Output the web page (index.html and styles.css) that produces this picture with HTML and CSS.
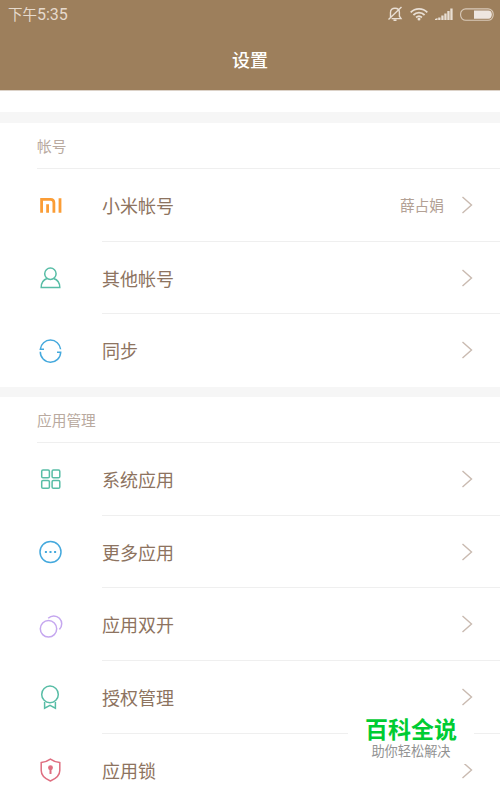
FILE: index.html
```html
<!DOCTYPE html>
<html lang="zh-CN">

<head>
    <meta charset="UTF-8">
    <meta name="viewport" content="width=device-width, initial-scale=1.0">
    <title>设置</title>
    <link rel="stylesheet" href="styles.css">
</head>

<body>
    <div class="screen">
        <header class="header">
            <div class="status-bar">
                <span class="time">下午<span class="digits">5:35</span></span>
                <div class="status-icons">
                    <svg width="16" height="16" viewBox="0 0 16 16" fill="none" stroke="#e9dfd4" stroke-width="1.4">
                        <path d="M3.5 11.5V6.5C3.5 3.8 5.2 2.2 8 2.2S12.4 3.8 12.4 6.5V10.2L14 12.6H4.6M6.5 14.3H9.5M1.5 13.5L14.5 1" />
                    </svg>
                    <svg width="18" height="14" viewBox="0 0 18 14" fill="none" stroke="#e9dfd4" stroke-width="1.8">
                        <path d="M.7 5.3C5.2.6 12.8.6 17.3 5.3M3.4 8C6.6 4.9 11.4 4.9 14.6 8M6.1 10.5C7.8 8.9 10.2 8.9 11.9 10.5" />
                        <circle cx="9" cy="11.9" r="1.5" fill="#e9dfd4" stroke="none" />
                    </svg>
                    <svg width="18" height="12" viewBox="0 0 18 12" fill="#e9dfd4">
                        <path d="M0 12V11L2.5 10V12ZM3.2 12V9.4H5.5V12ZM6.3 12V7.5H8.6V12ZM9.3 12V5.5H11.6V12ZM12.3 12V3H14.6V12ZM15.3 12V.5H17.6V12Z" />
                    </svg>
                    <svg class="battery" width="34" height="13" viewBox="0 0 34 13">
                        <rect x=".6" y=".9" width="32.6" height="11.4" rx="5.2" fill="none" stroke="#d9cab9" stroke-width="1.1" />
                        <path d="M14 2.5H28.5Q31.8 2.5 31.8 6.6T28.5 10.8H14Z" fill="#eee6df" />
                    </svg>
                </div>
            </div>
            <h1 class="title">设置</h1>
        </header>

        <main class="content">
            <section class="group">
                <h2 class="group-title">帐号</h2>
                <div class="row">
                    <svg class="icon orange" viewBox="0 0 28 28">
                        <path d="M5.6 21.8V8.4H14.5Q17.9 8.4 17.9 11.8V21.8M11.6 13.3V21.8M24 7.2V21.8" stroke-width="2.8" />
                    </svg>
                    <div class="cell">
                        <span class="label">小米帐号</span>
                        <span class="value">薛占娟</span>
                        <svg class="arrow" viewBox="0 0 12 18"><path d="M1.5 1L10.5 9L1.5 17" /></svg>
                    </div>
                </div>
                <div class="row">
                    <svg class="icon green" viewBox="0 0 28 28">
                        <circle cx="14.4" cy="9.7" r="5.7" />
                        <path d="M11.2 14.5C7.6 15.6 5.2 18.6 5.2 23.5H23.8C23.8 18.6 21.3 15.6 17.6 14.5" />
                    </svg>
                    <div class="cell">
                        <span class="label">其他帐号</span>
                        <svg class="arrow" viewBox="0 0 12 18"><path d="M1.5 1L10.5 9L1.5 17" /></svg>
                    </div>
                </div>
                <div class="row">
                    <svg class="icon blue" viewBox="0 0 28 28">
                        <path d="M8 12.3H4.3A10.2 10.2 0 0 1 24.6 12.3M21 15.2H24.7A10.2 10.2 0 0 1 4.3 14.8" />
                    </svg>
                    <div class="cell">
                        <span class="label">同步</span>
                        <svg class="arrow" viewBox="0 0 12 18"><path d="M1.5 1L10.5 9L1.5 17" /></svg>
                    </div>
                </div>
            </section>

            <section class="group">
                <h2 class="group-title">应用管理</h2>
                <div class="row">
                    <svg class="icon green" viewBox="0 0 28 28">
                        <rect x="5.7" y="5.1" width="7.7" height="7.7" rx="1.3" />
                        <rect x="16.1" y="5.1" width="7.7" height="7.7" rx="1.3" />
                        <rect x="5.7" y="15.5" width="7.7" height="7.7" rx="1.3" />
                        <rect x="16.1" y="15.5" width="7.7" height="7.7" rx="1.3" />
                    </svg>
                    <div class="cell">
                        <span class="label">系统应用</span>
                        <svg class="arrow" viewBox="0 0 12 18"><path d="M1.5 1L10.5 9L1.5 17" /></svg>
                    </div>
                </div>
                <div class="row">
                    <svg class="icon blue" viewBox="0 0 28 28">
                        <circle cx="14.5" cy="14" r="10.5" />
                        <path d="M8.9 14H10.9M13.5 14H15.5M18.1 14H20.1" stroke-width="2" />
                    </svg>
                    <div class="cell">
                        <span class="label">更多应用</span>
                        <svg class="arrow" viewBox="0 0 12 18"><path d="M1.5 1L10.5 9L1.5 17" /></svg>
                    </div>
                </div>
                <div class="row">
                    <svg class="icon purple" viewBox="0 0 28 28">
                        <circle cx="12.5" cy="17.8" r="8.2" />
                        <path d="M12.2 7.2A7.9 7.9 0 0 1 23.4 18.4" />
                    </svg>
                    <div class="cell">
                        <span class="label">应用双开</span>
                        <svg class="arrow" viewBox="0 0 12 18"><path d="M1.5 1L10.5 9L1.5 17" /></svg>
                    </div>
                </div>
                <div class="row">
                    <svg class="icon green" viewBox="0 0 28 28">
                        <circle cx="14" cy="11.4" r="8.3" />
                        <path d="M8.6 19V25.2L14 22.4L19.4 25.2V19" />
                    </svg>
                    <div class="cell">
                        <span class="label">授权管理</span>
                        <svg class="arrow" viewBox="0 0 12 18"><path d="M1.5 1L10.5 9L1.5 17" /></svg>
                    </div>
                </div>
                <div class="row">
                    <svg class="icon red" viewBox="0 0 28 28">
                        <path d="M14.4 3.2C11.5 5.3 8.4 6.3 5.2 6.6V14.5C5.2 19.5 9.3 22.9 14.4 25C19.5 22.9 23.8 19.5 23.8 14.5V6.6C20.5 6.3 17.3 5.3 14.4 3.2Z" />
                        <circle cx="14.5" cy="11.8" r="1.7" fill="#df6e80" />
                        <path d="M14.5 12V18" stroke-width="2" />
                    </svg>
                    <div class="cell">
                        <span class="label">应用锁</span>
                        <svg class="arrow" viewBox="0 0 12 18"><path d="M1.5 1L10.5 9L1.5 17" /></svg>
                    </div>
                </div>
            </section>
        </main>

        <div class="watermark">
            <strong class="brand">百科全说</strong>
            <span class="slogan">助你轻松解决</span>
        </div>
    </div>
</body>

</html>
```
FILE: styles.css
```css
* {
    box-sizing: border-box;
}

body {
    margin: 0;
    background-color: #fff;
    font-family: "Noto Sans CJK SC", sans-serif;
}

.screen {
    position: relative;
    height: 790px;
    overflow: hidden;
}

.header {
    height: 91px;
    background-color: #9d7f5c;
    border-bottom: 1px solid #dcd2c8;
}

.status-bar {
    display: flex;
    justify-content: space-between;
    align-items: center;
    height: 28px;
    padding: 0 6px 0 8px;
}

.time {
    font-size: 14.5px;
    line-height: 28px;
    color: #e6dacd;
}

.digits {
    font-family: Roboto, sans-serif;
    font-size: 16px;
}

.status-icons {
    display: flex;
    align-items: center;
    gap: 7px;
}

.title {
    margin: 0;
    font-size: 18px;
    font-weight: 500;
    line-height: 62px;
    text-align: center;
    color: #fff;
}

.content {
    padding-top: 21px;
}

.group {
    border-top: 11px solid #f6f6f6;
}

.group + .group {
    border-top-width: 10px;
}

.group-title {
    height: 46px;
    margin: 0 0 0 37px;
    font-size: 14.7px;
    font-weight: 400;
    line-height: 45px;
    color: #b9aaa0;
    border-bottom: 1px solid #efefef;
}

.row {
    display: flex;
    align-items: center;
    height: 72.7px;
    padding-left: 36px;
}

.cell {
    display: flex;
    flex: 1;
    align-items: center;
    height: 100%;
    margin-left: 38px;
    padding-right: 27px;
    border-bottom: 1px solid #efefef;
}

.row:last-child .cell {
    border-bottom-color: transparent;
}

.label {
    flex: 1;
    font-size: 18px;
    color: #8d7360;
}

.value {
    margin-right: 17px;
    font-size: 14.7px;
    color: #b3a195;
}

.icon {
    width: 28px;
    height: 28px;
    fill: none;
    stroke: currentColor;
    stroke-width: 1.5;
}

.arrow {
    width: 12px;
    height: 18px;
    fill: none;
    stroke: #c9bab0;
    stroke-width: 1.4;
}

.orange {
    color: #fb9d36;
}

.green {
    color: #58bda6;
}

.blue {
    color: #45a9dd;
}

.purple {
    color: #c5a7ef;
}

.red {
    color: #df6e80;
}

/* badge lying over the last rows */
.watermark {
    position: absolute;
    right: 26px;
    bottom: 26px;
    display: flex;
    flex-direction: column;
    align-items: center;
    width: 126px;
    height: 54px;
    background-color: #fff;
}

.brand {
    font-size: 23px;
    line-height: 36px;
    color: #00cc33;
}

.slogan {
    font-size: 13.2px;
    line-height: 10px;
    color: #929292;
}
```
